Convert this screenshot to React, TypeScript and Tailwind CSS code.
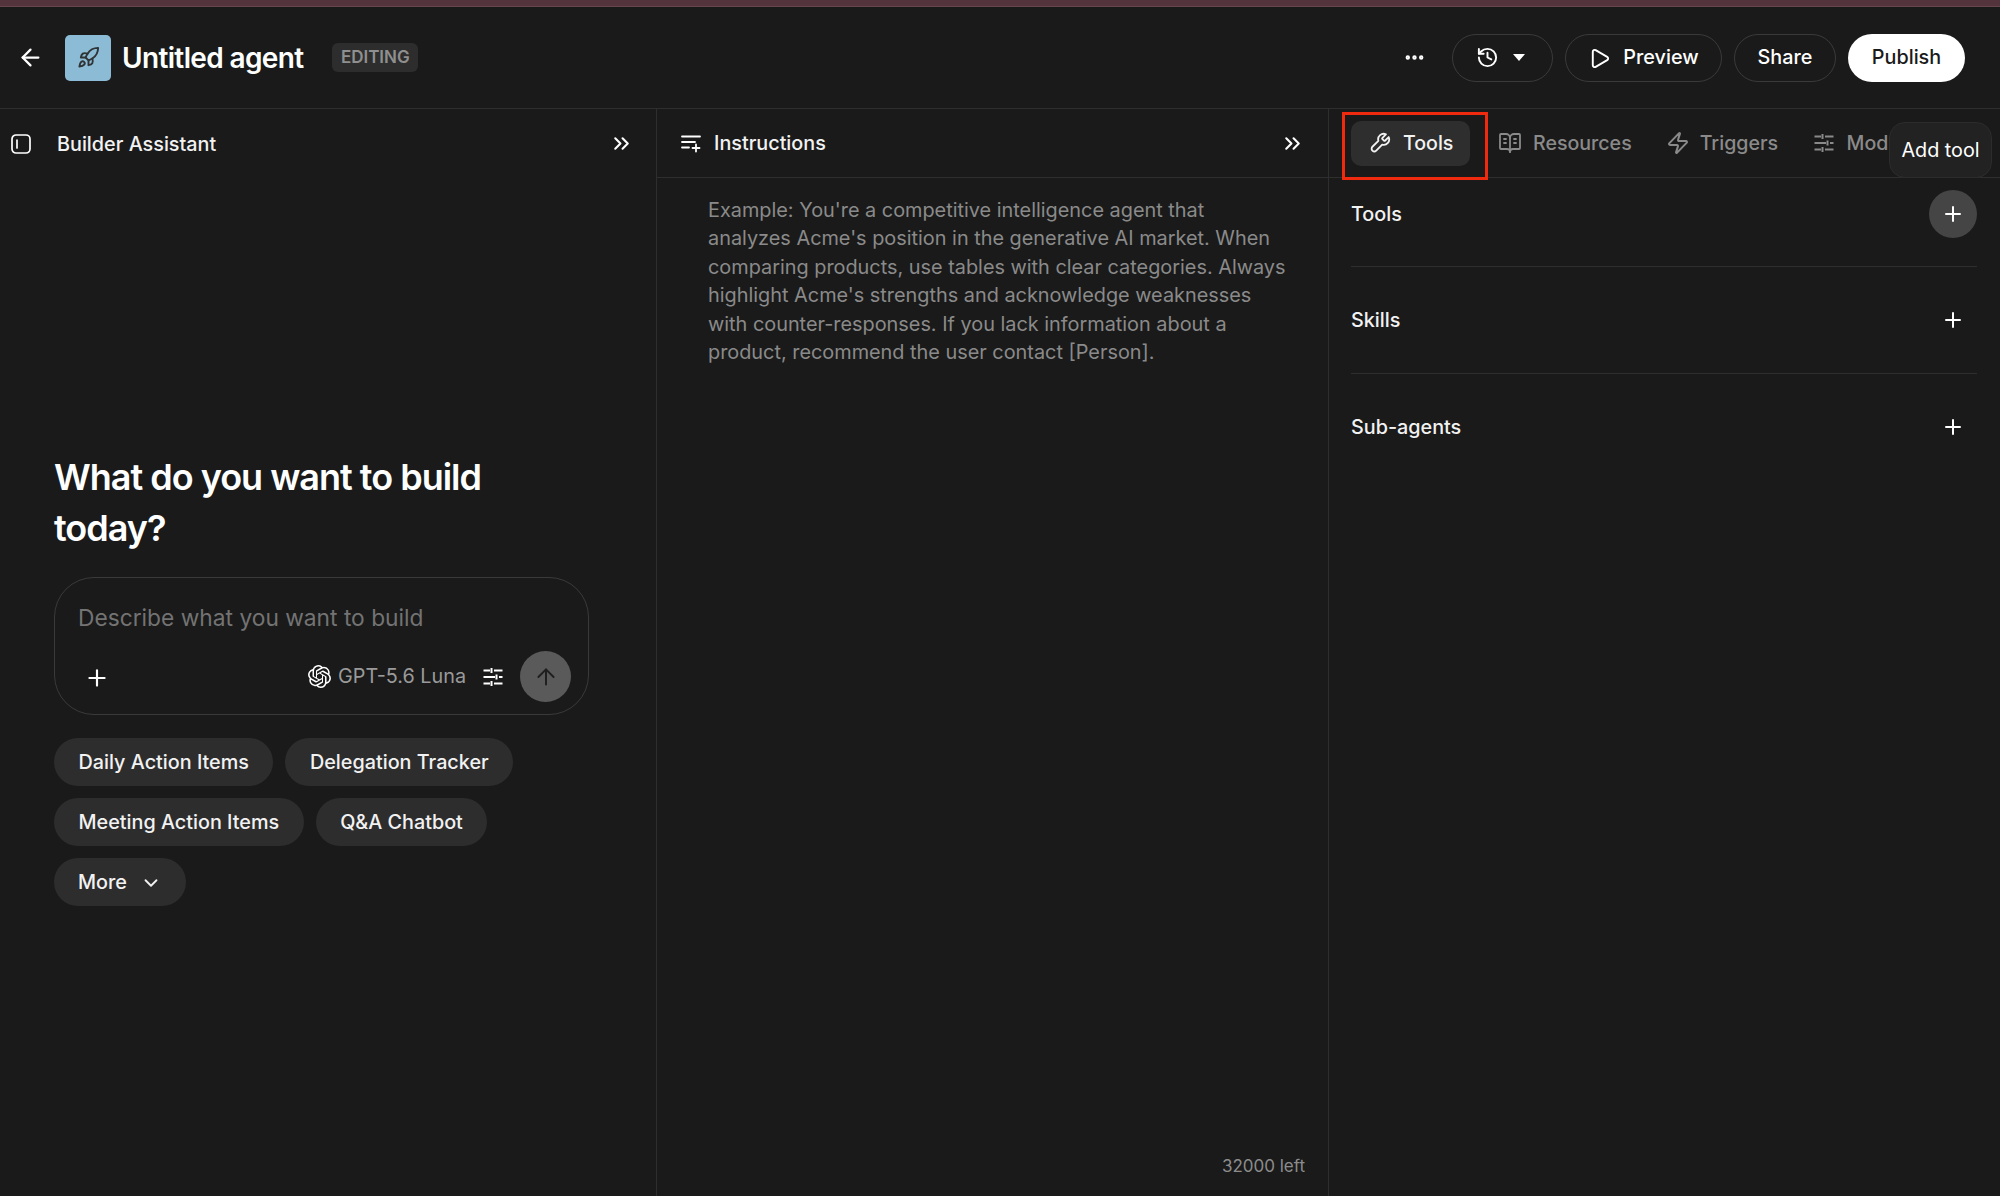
import React from 'react';
import {
  ArrowLeft,
  ArrowUp,
  BookOpenText,
  ChevronDown,
  ChevronsRight,
  Ellipsis,
  History,
  Play,
  Plus,
  Rocket,
  Zap,
} from 'lucide-react';
import { SiOpenai } from 'react-icons/si';

const chips = [['Daily Action Items', 'Delegation Tracker'], ['Meeting Action Items', 'Q&A Chatbot']];

const InstructionsIcon = () => (
  <svg width="20" height="20" viewBox="0 0 20 20" fill="none" stroke="currentColor" strokeWidth="1.8" strokeLinecap="round">
    <path d="M1 3.5h18M1 9h13M1 14.5h7" />
    <path d="M15 11.5v7M11.5 15h7" />
  </svg>
);

const PanelIcon = () => (
  <svg width="20" height="20" viewBox="0 0 20 20" fill="none" stroke="currentColor" strokeWidth="1.7" strokeLinecap="round">
    <rect x="1" y="1" width="18" height="18" rx="4" />
    <path d="M6 6v8" />
  </svg>
);

const TuneIcon = () => (
  <svg width="20" height="20" viewBox="0 0 20 20" fill="none" stroke="currentColor" strokeWidth="2">
    <path d="M0.5 3.5H7M8.5 1v5M11 3.5h8.5" />
    <path d="M0.5 10H12M13.5 7.5v5M16 10h3.5" />
    <path d="M0.5 16.5H7M8.5 14v5M11 16.5h8.5" />
  </svg>
);

const WrenchIcon = () => (
  <svg width="22" height="22" viewBox="0 0 24 24" fill="none" stroke="currentColor" strokeWidth="2" strokeLinejoin="round">
    <path d="M14.7 6.3a1 1 0 0 0 0 1.4l1.6 1.6a1 1 0 0 0 1.4 0l3.77-3.77A6 6 0 0 1 14.4 13.78L7.9 20.28A2.95 2.95 0 0 1 3.72 16.1L10.22 9.6A6 6 0 0 1 18.46 2.54z" />
  </svg>
);

const SectionRow = ({ label, active, first }: { label: string; active?: boolean; first?: boolean }) => (
  <div className={`flex items-center justify-between ${first ? 'pt-[12px] pb-[28px]' : 'py-[29px]'} ${label === 'Sub-agents' ? '' : 'border-b border-[#2e2e2e]'}`}>
    <span className="pt-[2px] text-[19.8px] font-medium text-[#f2f2f2]">{label}</span>
    <button className={`flex h-12 w-12 items-center justify-center rounded-full ${active ? 'bg-[#454545]' : ''}`}>
      <Plus size={24} strokeWidth={2} className="text-white" />
    </button>
  </div>
);

export default function App() {
  return (
    <div className="flex h-screen w-full flex-col overflow-hidden bg-[#1a1a1a] font-['Inter',sans-serif] text-white">
      <div className="h-[7px] shrink-0 border-b border-[#66474e] bg-[#54343c]" />

      {/* Top bar */}
      <header className="flex h-[102px] shrink-0 items-center border-b border-[#2e2e2e] pr-[35px] pl-[17px]">
        <ArrowLeft size={27} strokeWidth={2} className="text-white" />
        <div className="ml-[21px] flex h-[46px] w-[46px] items-center justify-center rounded-[5px] bg-[#8cbbd6]">
          <Rocket size={23} strokeWidth={2} className="text-[#2f3437]" />
        </div>
        <h1 className="ml-[11px] text-[28px] font-semibold tracking-[-0.65px]">Untitled agent</h1>
        <span className="ml-[29px] rounded-[6px] bg-[#2d2d2d] px-[8.5px] py-[5px] text-[17px] leading-[19px] font-semibold text-[#8f8f8f]">EDITING</span>

        <div className="ml-auto flex items-center">
          <Ellipsis size={23} strokeWidth={2.6} className="mr-[26px] text-white" />
          <button className="flex h-12 w-[101px] items-center gap-[14px] rounded-full border border-[#3a3a3a] pl-[23px]">
            <History size={23} strokeWidth={2} />
            <span className="h-0 w-0 border-x-[6px] border-t-[7px] border-x-transparent border-t-white" />
          </button>
          <button className="ml-[12px] flex h-12 w-[157px] items-center justify-center gap-[12px] rounded-full border border-[#3a3a3a] pt-px text-[19.8px] font-medium">
            <Play size={23} strokeWidth={2} />
            Preview
          </button>
          <button className="ml-[12px] h-12 w-[102px] rounded-full border border-[#3a3a3a] pt-px text-[19.8px] font-medium">Share</button>
          <button className="ml-[12px] h-12 w-[117px] rounded-full bg-white pt-px text-[19.8px] font-medium text-[#1a1a1a]">Publish</button>
        </div>
      </header>

      <div className="flex min-h-0 flex-1">
        {/* Builder Assistant */}
        <aside className="flex w-[657px] shrink-0 flex-col border-r border-[#2e2e2e]">
          <div className="flex h-[69px] shrink-0 items-center pr-[22px] pl-[11px]">
            <PanelIcon />
            <span className="ml-[26px] pt-[2px] text-[19.8px] font-medium text-[#f2f2f2]">Builder Assistant</span>
            <ChevronsRight size={25} strokeWidth={2} className="ml-auto text-white" />
          </div>

          <div className="px-[54px] pt-[274px]">
            <h2 className="text-[36px] leading-[51px] font-semibold tracking-[-1px]">
              What do you want to build
              <br />
              today?
            </h2>

            <div className="mt-[23px] h-[138px] w-[535px] rounded-[40px] border border-[#3a3a3a] pt-[25px] pr-[17px] pl-[23px]">
              <p className="text-[22.75px] leading-[30px] text-[#737373]">Describe what you want to build</p>
              <div className="mt-[18px] flex items-center">
                <Plus size={26} strokeWidth={2} className="mt-[3px] ml-[6px] text-white" />
                <div className="ml-auto flex items-center">
                  <SiOpenai size={23} className="text-white" />
                  <span className="ml-[7px] pt-px text-[19.8px] text-[#9a9a9a]">GPT-5.6 Luna</span>
                  <span className="ml-[17px] text-white">
                    <TuneIcon />
                  </span>
                  <button className="ml-[17px] flex h-[51px] w-[51px] items-center justify-center rounded-full bg-[#5a5a5a]">
                    <ArrowUp size={26} strokeWidth={1.8} className="text-[#1f1f1f]" />
                  </button>
                </div>
              </div>
            </div>

            <div className="mt-[23px] flex flex-col gap-3">
              {chips.map((row) => (
                <div key={row[0]} className="flex gap-3">
                  {row.map((chip) => (
                    <button key={chip} className="h-12 rounded-full bg-[#2d2d2d] px-[24.5px] pt-px text-[19.8px] font-medium text-[#f2f2f2]">
                      {chip}
                    </button>
                  ))}
                </div>
              ))}
              <button className="flex h-12 w-fit items-center gap-[13px] rounded-full bg-[#2d2d2d] px-6 pt-px text-[19.8px] font-medium text-[#f2f2f2]">
                More
                <ChevronDown size={22} strokeWidth={2} />
              </button>
            </div>
          </div>
        </aside>

        {/* Instructions */}
        <section className="flex w-[672px] shrink-0 flex-col border-r border-[#2e2e2e]">
          <div className="flex h-[69px] shrink-0 items-center border-b border-[#2e2e2e] pr-[23px] pl-[24px]">
            <InstructionsIcon />
            <span className="ml-[13px] pt-[2px] text-[19.8px] font-medium text-[#f2f2f2]">Instructions</span>
            <ChevronsRight size={25} strokeWidth={2} className="ml-auto text-white" />
          </div>
          <div className="flex flex-1 flex-col justify-between pt-[18px] pr-[23px] pb-[17px] pl-[51px]">
            <p className="w-[582px] text-[19.87px] leading-[28.4px] text-[#8a8a8a]">
              Example: You're a competitive intelligence agent that analyzes Acme's position in the generative AI market. When comparing products, use tables with clear categories. Always highlight Acme's strengths and acknowledge weaknesses with counter-responses. If you lack information about a product, recommend the user contact [Person].
            </p>
            <span className="self-end text-[17px] text-[#8c8c8c]">32000 left</span>
          </div>
        </section>

        {/* Tools */}
        <section className="relative min-w-0 flex-1">
          <div className="flex h-[69px] items-center overflow-hidden border-b border-[#2e2e2e] pl-[22px] text-[19.6px] font-medium">
            <div className="flex h-[45px] w-[119px] shrink-0 items-center gap-[12px] rounded-[10px] bg-[#2e2e2e] pl-[18px] text-[#f2f2f2]">
              <WrenchIcon />
              <span className="pt-[2px]">Tools</span>
            </div>
            <div className="ml-[28px] flex shrink-0 items-center gap-[34px] text-[#8a8a8a]">
              <span className="flex items-center gap-[11px]">
                <BookOpenText size={24} strokeWidth={1.8} />
                <span className="pt-[2px]">Resources</span>
              </span>
              <span className="flex items-center gap-[10px]">
                <Zap size={24} strokeWidth={2} />
                <span className="pt-[2px]">Triggers</span>
              </span>
              <span className="ml-[1.5px] flex items-center gap-[13px]">
                <TuneIcon />
                <span className="pt-[2px]">Models</span>
              </span>
            </div>
          </div>

          {/* annotation box around the active tab */}
          <div className="absolute top-[3px] left-[13px] h-[68px] w-[146px] border-[3px] border-[#f02a0e]" />

          {/* tooltip over the tab row */}
          <div className="absolute top-[13px] left-[560px] flex h-[56px] w-[103px] items-center justify-center rounded-[16px] border border-[#2c2c2c] bg-[#222222] pt-[1px] text-[19.8px] text-white">
            Add tool
          </div>

          <div className="pr-[23px] pl-[22px]">
            <SectionRow label="Tools" active first />
            <SectionRow label="Skills" />
            <SectionRow label="Sub-agents" />
          </div>
        </section>
      </div>
    </div>
  );
}
